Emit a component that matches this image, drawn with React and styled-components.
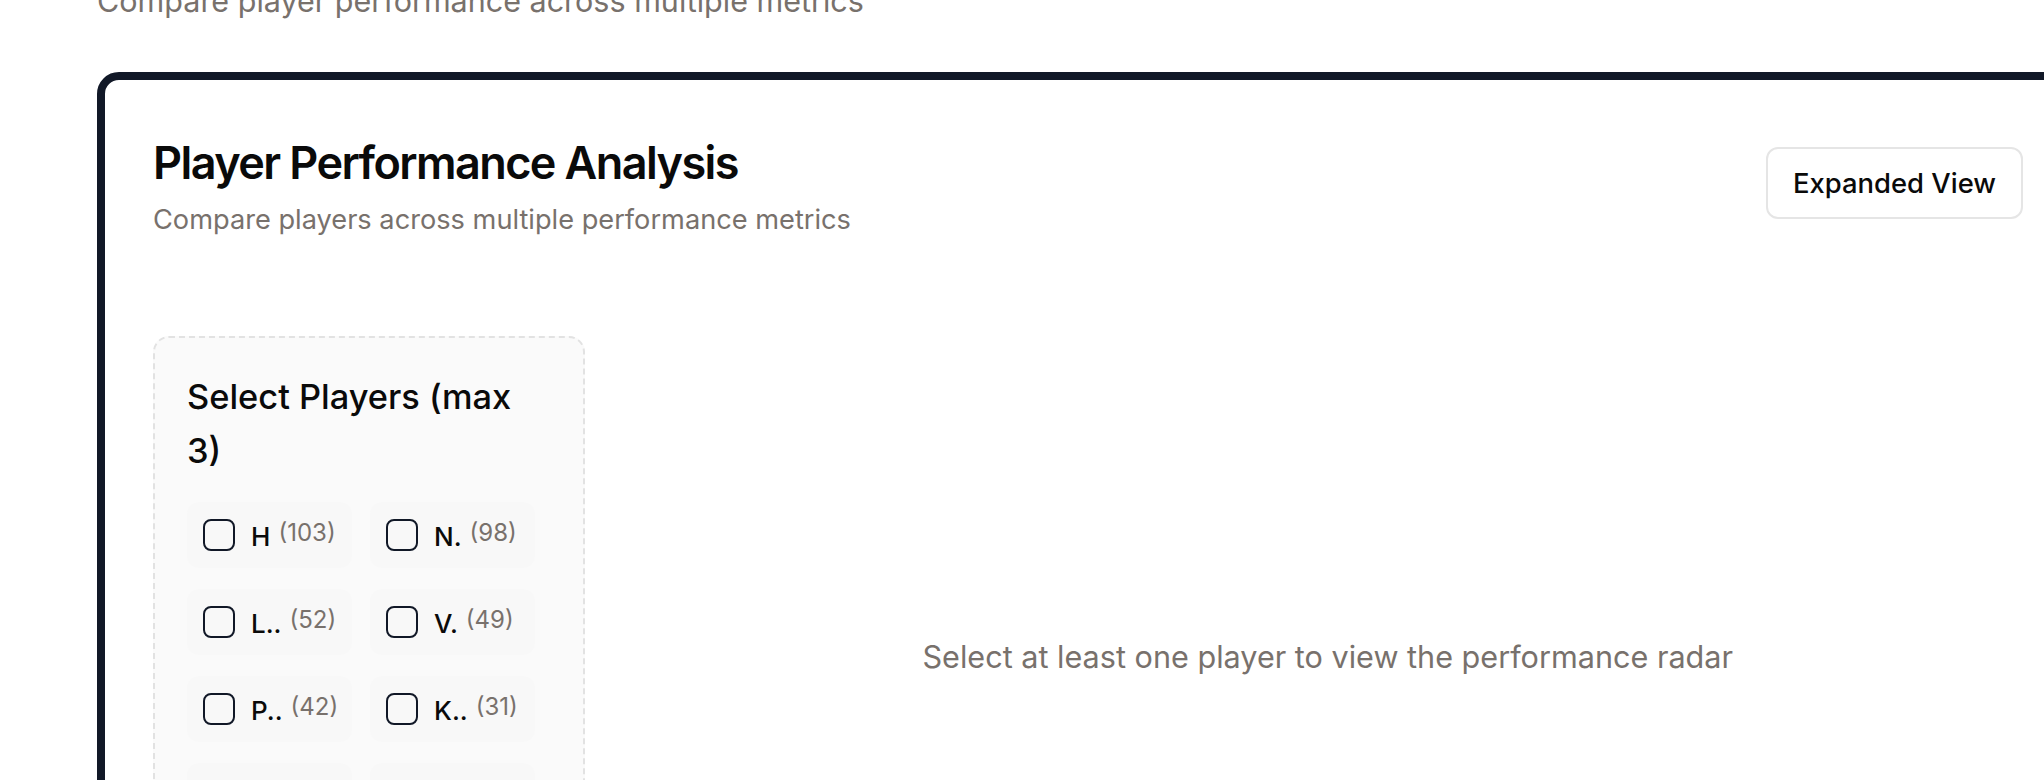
import React from 'react';
import styled, { createGlobalStyle } from 'styled-components';

const players = [
  { name: 'H', count: 103 },
  { name: 'N.', count: 98 },
  { name: 'L..', count: 52 },
  { name: 'V.', count: 49 },
  { name: 'P..', count: 42 },
  { name: 'K..', count: 31 },
  { name: 'M..', count: 28 },
  { name: 'S..', count: 24 },
];

const App = () => {
  return (
    <>
      <GlobalStyle />
      <Page>
        <Intro>Compare player performance across multiple metrics</Intro>
        <Card>
          <Header>
            <div>
              <Title>Player Performance Analysis</Title>
              <Description>Compare players across multiple performance metrics</Description>
            </div>
            <Button type='button'>Expanded View</Button>
          </Header>
          <Body>
            <Picker>
              <PickerTitle>Select Players (max 3)</PickerTitle>
              <PlayerGrid>
                {players.map(player => (
                  <PlayerTile key={player.name}>
                    <Box role='checkbox' aria-checked='false' />
                    <Label>
                      {player.name}
                      <Count>({player.count})</Count>
                    </Label>
                  </PlayerTile>
                ))}
              </PlayerGrid>
            </Picker>
            <ChartArea>
              <Empty>Select at least one player to view the performance radar</Empty>
            </ChartArea>
          </Body>
        </Card>
      </Page>
    </>
  );
};

const GlobalStyle = createGlobalStyle`
  html, body {
    margin: 0;
    overflow: hidden;
    background: #fff;
  }
  body {
    font-family: Inter, "Noto Sans", sans-serif;
    color: #0a0a0a;
  }
  * {
    box-sizing: border-box;
  }
`;

const Page = styled.div`
  margin-top: -23px;
  padding-left: 97px;
`;

const Intro = styled.p`
  margin: 0 0 47px;
  font-size: 30.5px;
  line-height: 48px;
  color: #78716c;
`;

const Card = styled.section`
  width: 1982px;
  border: 8px solid #111827;
  border-radius: 22px;
  background: #fff;
  padding: 48px;
`;

const Header = styled.div`
  display: flex;
  justify-content: space-between;
  align-items: flex-start;
`;

const Title = styled.h2`
  margin: 12px 0 0;
  font-size: 45px;
  line-height: 45px;
  font-weight: 600;
  letter-spacing: -0.035em;
  color: #0a0a0a;
`;

const Description = styled.p`
  margin: 15px 0 0;
  font-size: 27.2px;
  line-height: 40px;
  color: #78716c;
`;

const Button = styled.button`
  margin-top: 19px;
  height: 72px;
  padding: 0 25px;
  border: 2px solid #e5e5e5;
  border-radius: 12px;
  background: #fff;
  font-family: inherit;
  font-size: 27.4px;
  font-weight: 500;
  color: #0a0a0a;
`;

const Body = styled.div`
  margin-top: 96px;
  display: grid;
  grid-template-columns: repeat(4, minmax(0, 1fr));
  gap: 48px;
`;

const Picker = styled.div`
  border: 2px dashed #e2e2e2;
  border-radius: 16px;
  background: #fafafa;
  padding: 32px;
`;

const PickerTitle = styled.h3`
  max-width: 330px;
  margin: 0 0 24px;
  font-size: 34.4px;
  line-height: 54px;
  font-weight: 500;
`;

const PlayerGrid = styled.div`
  display: grid;
  grid-template-columns: 165px 165px;
  column-gap: 18px;
  row-gap: 21px;
`;

const PlayerTile = styled.label`
  display: flex;
  align-items: center;
  gap: 16px;
  height: 66px;
  padding: 0 16px;
  border-radius: 12px;
  background: #f8f8f8;
`;

const Box = styled.span`
  flex: none;
  width: 32px;
  height: 32px;
  border: 2.5px solid #111827;
  border-radius: 8px;
`;

const Label = styled.span`
  font-size: 26px;
  font-weight: 500;
  white-space: nowrap;
`;

const Count = styled.span`
  margin-left: 8px;
  font-size: 24px;
  font-weight: 400;
  color: #78716c;
  vertical-align: 5px;
`;

const ChartArea = styled.div`
  grid-column: span 3;
  height: 640px;
  display: flex;
  align-items: center;
  justify-content: center;
`;

const Empty = styled.p`
  margin: 0;
  font-size: 30.6px;
  color: #78716c;
`;

export default App;
